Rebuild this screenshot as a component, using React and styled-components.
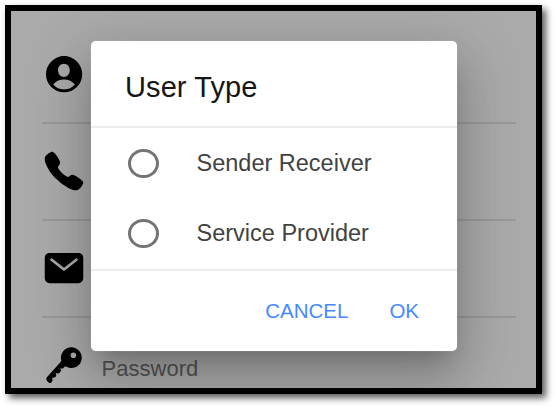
import React from "react";
import styled, { createGlobalStyle } from "styled-components";
import { IoCall, IoMail } from "react-icons/io5";

const GlobalStyle = createGlobalStyle`
  * { box-sizing: border-box; }
  body {
    margin: 0;
    background: #fff;
    font-family: "Liberation Sans", Arial, sans-serif;
    overflow: hidden;
  }
`;

const Page = styled.div`
  width: 555px;
  height: 407px;
  padding: 5px 0 0 5px;
`;

const Screen = styled.main`
  position: relative;
  width: 537px;
  height: 389px;
  border: 6px solid #000;
  background: #aaa;
  overflow: hidden;
`;

const Frame = styled.div`
  width: 537px;
  box-shadow: 4px 4px 7px rgba(0, 0, 0, 0.65);
`;

const Form = styled.div`
  width: 474px;
  margin: 16px 0 0 31px;
`;

const Field = styled.div`
  display: flex;
  align-items: center;
  height: 97px;
  padding-bottom: 1px;
  border-bottom: 2px solid #999;
  color: #000;

  svg {
    flex: none;
    margin-left: -0.4px;
  }
`;

const Placeholder = styled.span`
  margin: 8px 0 0 16px;
  font-size: 22px;
  line-height: 26px;
  color: #545454;
`;

const Dialog = styled.section`
  position: absolute;
  top: 30px;
  left: 80px;
  width: 366px;
  height: 310px;
  border-radius: 5px;
  background: #fff;
  box-shadow:
    0 0 1px rgba(225, 225, 225, 0.7),
    0 14px 20px -9px rgba(0, 0, 0, 0.2),
    0 32px 50px 4px rgba(0, 0, 0, 0.14),
    0 12px 61px 10px rgba(0, 0, 0, 0.12);
`;

const Title = styled.h1`
  margin: 0;
  height: 85px;
  padding: 29px 0 0 34px;
  font-size: 29px;
  line-height: 34px;
  font-weight: 400;
  letter-spacing: 0.1px;
  color: #161616;
`;

const Options = styled.div`
  height: 145px;
  border-top: 2px solid #ececec;
  border-bottom: 2px solid #ececec;
`;

const Option = styled.label`
  display: flex;
  align-items: center;
  height: 70.5px;
  padding-left: 37px;
  gap: 38px;
  font-size: 23.5px;
  color: #424242;
`;

const Radio = styled.span`
  width: 30.5px;
  height: 29px;
  border: 3px solid #747474;
  border-radius: 50%;
`;

const Actions = styled.div`
  display: flex;
  justify-content: flex-end;
  gap: 41px;
  padding: 27px 38px 0 0;
`;

const Action = styled.button`
  padding: 0;
  border: 0;
  background: none;
  font: 20.5px/25px "Liberation Sans", Arial, sans-serif;
  color: #4689ff;
`;

function PersonIcon({ size }) {
  return (
    <svg width={size} height={size} viewBox="0 0 44 44" fill="currentColor">
      <path
        fillRule="evenodd"
        d="M22.1 4.1a18.1 18.1 0 1 0 0 36.2a18.1 18.1 0 1 0 0-36.2Z
           M21.9 11.8c3.4 0 5.9 2.9 5.9 6.5s-2.6 6.7-5.9 6.7s-5.9-3.1-5.9-6.7s2.5-6.5 5.9-6.5Z
           M11.2 32.6C13.4 29.2 17.5 27.4 22 27.4s8.700 1.800 11 5.200C30.300 35.800 26.400 37.500 22 37.500s-8.200-1.700-10.800-4.900Z"
      />
    </svg>
  );
}

function KeyIcon({ size }) {
  return (
    <svg width={size} height={size} viewBox="0 0 44 44" fill="currentColor">
      <path
        fillRule="evenodd"
        d="M29.4 4.300a10.400 10.400 0 0 0-10.200 12.700c.2.9 0 1.500-.6 2.100L4.900 34.200c-.6.7-.7 1.500-.5 2.300c.4 1.500 1.600 2.800 3.100 3.400c.7.3 1.300 0 1.700-.5l1-1.200c.5-.7.5-1.300.2-2.100l-.5-1.400l1.500.1c.8.1 1.300-.1 1.800-.7l.6-.7c.5-.6.6-1.100.3-1.900l-.5-1.400l2.100.4c.8.1 1.400-.1 1.900-.7l1-1.300c.4-.5.5-1 .2-1.700l-.5-1.600l1.400.3c.8.2 1.300 0 1.800-.6l.8-.9c.5-.5 1-.6 1.700-.4a10.400 10.400 0 1 0 5.400-19.300Z
           M31.400 9.500a2.800 2.800 0 1 1 0 5.600a2.800 2.800 0 0 1 0-5.600Z"
      />
    </svg>
  );
}

const fields = [
  { Icon: PersonIcon },
  { Icon: IoCall },
  { Icon: IoMail },
  { Icon: KeyIcon, label: "Password" },
];

export default function App() {
  return (
    <Page>
      <GlobalStyle />
      <Frame>
        <Screen>
          <Form>
            {fields.map(({ Icon, label }, i) => (
              <Field key={i}>
                <Icon size={44} />
                {label && <Placeholder>{label}</Placeholder>}
              </Field>
            ))}
          </Form>
          <Dialog>
            <Title>User Type</Title>
            <Options>
              <Option><Radio />Sender Receiver</Option>
              <Option><Radio />Service Provider</Option>
            </Options>
            <Actions>
              <Action>CANCEL</Action>
              <Action>OK</Action>
            </Actions>
          </Dialog>
        </Screen>
      </Frame>
    </Page>
  );
}
